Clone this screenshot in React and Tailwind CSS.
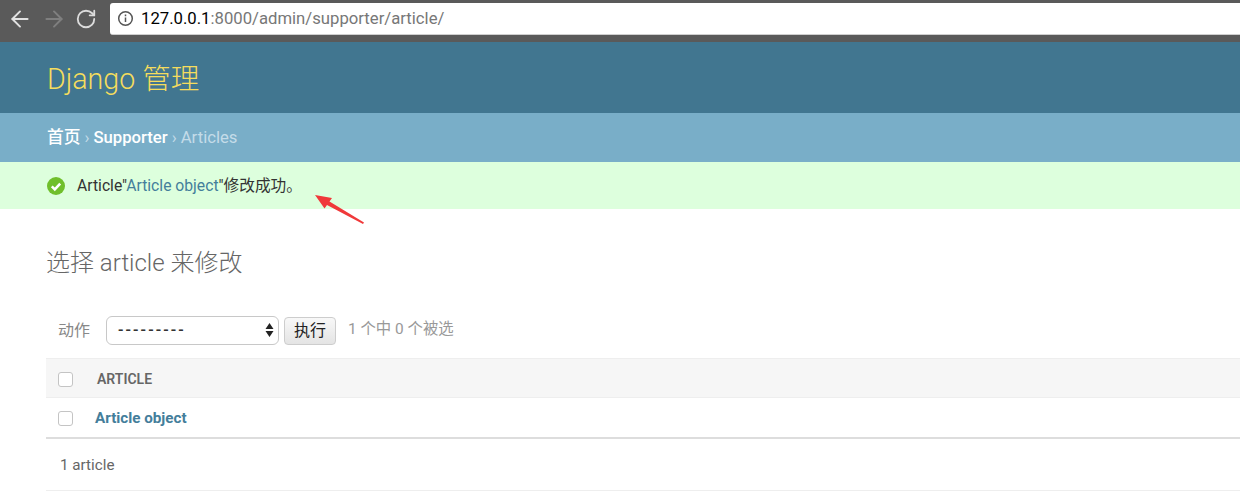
import { ArrowLeft, ArrowRight, RotateCw } from 'lucide-react';

const cjk = "font-['Roboto','Noto_Sans_CJK_SC',sans-serif]";

function Checkbox() {
  return <span className="block w-[15px] h-[15px] rounded-[3px] border border-[#c4c4c4] bg-white" />;
}

export default function App() {
  return (
    <div className={`relative w-[1240px] h-[494px] overflow-hidden bg-white ${cjk} text-[#666]`}>
      {/* browser chrome */}
      <div className="h-[42px] flex items-start bg-[#5a5a5a]">
        <div className="w-[110px] h-[38px] pl-[7px] flex items-center gap-[8px]">
          <ArrowLeft size={26} strokeWidth={1.8} className="text-[#e2e2e2]" />
          <ArrowRight size={26} strokeWidth={1.8} className="text-[#7f7f7f]" />
          <RotateCw size={22} strokeWidth={2} className="text-[#dcdcdc]" />
        </div>
        <div className="flex-1 h-[32px] mt-[3px] pl-[7px] flex items-center gap-[7px] bg-white rounded-l-[3px] border-b border-[#cfcfcf]">
          <svg width="17" height="17" viewBox="0 0 17 17" fill="none" stroke="#555" strokeWidth="1.5">
            <circle cx="8.5" cy="8.5" r="6.8" />
            <path d="M8.5 7.5v4.5M8.5 4.6v1.6" />
          </svg>
          <span className="text-[16.7px] text-[#777] leading-none pt-[1px]">
            <span className="text-black">127.0.0.1</span>:8000/admin/supporter/article/
          </span>
        </div>
      </div>

      {/* site header */}
      <div className="h-[71px] pl-[47px] pt-[3px] flex items-center bg-[#417690]">
        <h1 className="text-[28.6px] font-light text-[#f5dd5d] leading-none">Django 管理</h1>
      </div>

      {/* breadcrumbs */}
      <div className="h-[49px] pl-[47px] pt-[1px] flex items-center bg-[#79aec8] text-[16.7px] text-[#c4dce8]">
        <span className="text-white font-medium">首页</span>
        <span className="mx-[4px]">›</span>
        <span className="text-white font-medium">Supporter</span>
        <span className="mx-[4px]">›</span>
        <span>Articles</span>
      </div>

      {/* success message */}
      <div className="h-[47px] pl-[47px] flex items-center gap-[12px] bg-[#dfd] text-[15.7px] text-[#333]">
        <svg width="18" height="18" viewBox="0 0 18 18">
          <circle cx="9" cy="9" r="9" fill="#70bf2b" />
          <path d="M4.8 9.3l3 3 5.4-5.6" fill="none" stroke="#fff" strokeWidth="2.6" />
        </svg>
        <span>Article"<span className="text-[#447e9b]">Article object</span>"修改成功。</span>
      </div>

      {/* content */}
      <div className="pl-[46px]">
        <h2 className="mt-[38px] text-[24px] font-light leading-[32px] text-[#666]">选择 article 来修改</h2>

        <div className="mt-[35px] h-[32px] pl-[12px] flex items-center text-[16px] text-[#888]">
          <span className="w-[48px] pt-[2px]">动作</span>
          <div className="w-[173px] h-[29px] pl-[11px] pr-[4px] flex items-center justify-between rounded-[6px] border border-[#c8c8c8] bg-white text-[#333] text-[16px]">
            <span className="tracking-[2.1px] font-medium">---------</span>
            <svg width="9" height="16" viewBox="0 0 9 16" fill="#222">
              <path d="M4.5 1L8.5 7H.5zM4.5 15L.5 9h8z" />
            </svg>
          </div>
          <div className="ml-[5px] w-[52px] h-[28px] mt-[1px] flex items-center justify-center rounded-[4px] border border-[#cdcdcd] bg-gradient-to-b from-[#f8f8f8] to-[#e4e4e4] text-[#222] text-[16px]">执行</div>
          <span className="ml-[12px] text-[15.4px] text-[#999]">1 个中 0 个被选</span>
        </div>

        {/* results table */}
        <div className="mt-[12px] h-[40px] pt-[2px] flex items-center bg-[#f6f6f6] border-y border-[#eee]">
          <div className="pl-[12px] w-[51px]"><Checkbox /></div>
          <span className="text-[14px] font-semibold text-[#666]">ARTICLE</span>
        </div>
        <div className="h-[41px] pt-[2px] flex items-center border-b-2 border-[#ddd]">
          <div className="pl-[12px] w-[49px]"><Checkbox /></div>
          <span className="text-[15.2px] font-bold text-[#447e9b]">Article object</span>
        </div>
        <div className="h-[52px] pl-[14px] pt-[1px] flex items-center border-b border-[#eee] text-[15.2px] text-[#666]">1 article</div>
      </div>

      {/* red annotation arrow */}
      <svg className="absolute left-[312px] top-[192px]" width="56" height="36" viewBox="0 0 56 36">
        <path d="M3 3L20 6L17.5 9.5L52 30.5L51 32L15 13L12.5 16.5Z" fill="#f0393a" />
      </svg>
    </div>
  );
}
